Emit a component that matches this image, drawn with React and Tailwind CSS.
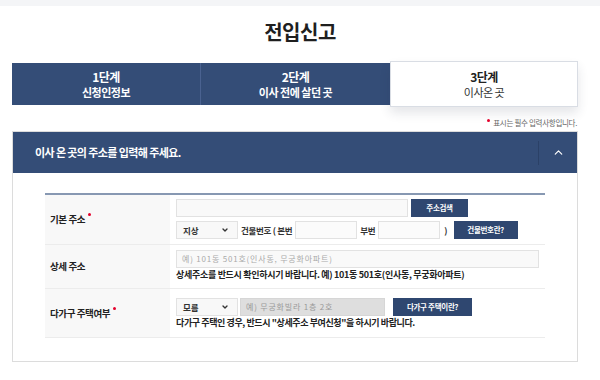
import React from "react";
import { ChevronUp, ChevronDown } from "lucide-react";

const STEPS = [
  { no: "1단계", name: "신청인정보" },
  { no: "2단계", name: "이사 전에 살던 곳" },
];

const Dot = () => (
  <span className="relative -top-[5px] ml-[3px] inline-block h-[3px] w-[3px] rounded-full bg-[#e4002b]" />
);

const FakeSelect = ({ value }) => (
  <div className="flex h-[18px] w-[62px] shrink-0 items-center justify-between border border-[#e2e2e2] bg-[#f8f8f8] pl-[6px] pr-[8px]">
    <span className="text-[8.5px] font-bold text-[#333]">{value}</span>
    <ChevronDown size={8} strokeWidth={4} className="text-[#333]" />
  </div>
);

const Btn = ({ className, children }) => (
  <div
    className={`flex h-[18px] shrink-0 items-center justify-center bg-[#2f4770] text-[7.5px] font-bold tracking-[-0.3px] text-white ${className}`}
  >
    {children}
  </div>
);

const Row = ({ label, required, className, children }) => (
  <div className={`grid grid-cols-[125px_1fr] border-b border-[#ececec] ${className}`}>
    <div className="flex items-center bg-[#f8f8f8] pl-[5px] text-[9.5px] font-bold tracking-[-0.4px] text-[#222]">
      {label}
      {required && <Dot />}
    </div>
    <div className="pl-[6px]">{children}</div>
  </div>
);

export default function App() {
  return (
    <div className="h-[380px] w-[600px] overflow-hidden bg-white font-['Noto_Sans_CJK_KR','Noto_Sans',sans-serif] text-[#222]">
      <div className="h-[6px] bg-[#f4f5f7]" />

      <h1 className="pt-[12px] text-center text-[20px] font-bold leading-[28px] tracking-[-0.5px] text-[#1f1f1f]">
        전입신고
      </h1>

      {/* steps */}
      <div className="ml-[12px] mt-[15px] flex w-[566px] items-center">
        {STEPS.map((s, i) => (
          <div
            key={s.no}
            className={`flex h-[42px] w-[189px] flex-col items-center justify-center bg-[#344d77] text-white ${
              i === 0 ? "border-r border-[#4a6290]" : ""
            }`}
          >
            <div className="text-[12px] font-bold leading-[17px] tracking-[-0.5px]">{s.no}</div>
            <div className="text-[11px] font-bold leading-[15px] tracking-[-0.5px]">{s.name}</div>
          </div>
        ))}
        <div className="flex h-[46px] w-[188px] flex-col items-center justify-center border border-[#d9dde4] bg-white shadow-[0_6px_10px_rgba(40,50,70,0.12)]">
          <div className="text-[12px] font-bold leading-[17px] tracking-[-0.5px] text-[#222]">3단계</div>
          <div className="text-[11px] leading-[15px] tracking-[-0.5px] text-[#333]">이사온 곳</div>
        </div>
      </div>

      {/* required note */}
      <div className="ml-[12px] flex h-[24px] w-[565px] items-center justify-end pt-[8px] text-[7.5px] tracking-[-0.3px] text-[#666]">
        <span className="relative -top-[3px] mr-[3px] inline-block h-[3px] w-[3px] rounded-full bg-[#e4002b]" />
        표시는 필수 입력사항입니다.
      </div>

      {/* panel */}
      <div className="ml-[12px] w-[566px] border border-[#dcdcdc]">
        <div className="flex h-[41px] items-center bg-[#344d77] pl-[22px] text-white">
          <span className="text-[11px] font-bold tracking-[-0.6px]">이사 온 곳의 주소를 입력해 주세요.</span>
          <div className="ml-auto flex h-full items-center">
            <div className="h-[24px] border-l border-[#2b4167]" />
            <div className="flex w-[38px] items-center justify-center">
              <ChevronUp size={13} strokeWidth={2.2} />
            </div>
          </div>
        </div>

        <div className="px-[32px] pb-[23px] pt-[20px]">
          <div className="border-t-2 border-[#8798b2]">
            <Row label="기본 주소" required className="h-[50px]">
              <div className="flex flex-col gap-[4px] pt-[4px]">
                <div className="flex">
                  <div className="h-[18px] w-[232px] border border-[#e2e2e2] bg-[#f9f9f9]" />
                  <Btn className="ml-[3px] w-[57px]">주소검색</Btn>
                </div>
                <div className="flex items-center">
                  <FakeSelect value="지상" />
                  <span className="ml-[3px] text-[8.5px] font-bold tracking-[-0.3px] text-[#333]">건물번호 ( 본번</span>
                  <div className="ml-[3px] h-[18px] w-[62px] border border-[#e2e2e2] bg-[#fbfbfb]" />
                  <span className="ml-[3px] text-[8.5px] font-bold tracking-[-0.3px] text-[#333]">부번</span>
                  <div className="ml-[3px] h-[18px] w-[62px] border border-[#e2e2e2] bg-[#fbfbfb]" />
                  <span className="ml-[4px] text-[8.5px] font-bold text-[#333]">)</span>
                  <Btn className="ml-[6px] w-[64px]">건물번호란?</Btn>
                </div>
              </div>
            </Row>

            <Row label="상세 주소" className="h-[44px]">
              <div className="pt-[5px]">
                <div className="flex h-[18px] w-[363px] items-center border border-[#e2e2e2] bg-[#f9f9f9] pl-[5px] text-[8px] tracking-[0.8px] text-[#aaa]">
                  예) 101동 501호(인사동, 무궁화아파트)
                </div>
                <p className="mt-[1px] text-[9px] font-bold leading-[12px] tracking-[-0.3px] text-[#222]">
                  상세주소를 반드시 확인하시기 바랍니다. 예) 101동 501호(인사동, 무궁화아파트)
                </p>
              </div>
            </Row>

            <Row label="다가구 주택여부" required className="h-[49px]">
              <div className="pt-[9px]">
                <div className="flex items-center">
                  <FakeSelect value="모름" />
                  <div className="ml-[2px] flex h-[18px] w-[145px] items-center border border-[#d6d6d6] bg-[#dedede] pl-[5px] text-[8px] tracking-[0.8px] text-[#999]">
                    예) 무궁화빌라 1층 2호
                  </div>
                  <Btn className="ml-[8px] w-[79px]">다가구 주택이란?</Btn>
                </div>
                <p className="mt-[1px] text-[9px] font-bold leading-[12px] tracking-[-0.4px] text-[#222]">
                  다가구 주택인 경우, 반드시 "상세주소 부여신청"을 하시기 바랍니다.
                </p>
              </div>
            </Row>
          </div>
        </div>
      </div>
    </div>
  );
}
